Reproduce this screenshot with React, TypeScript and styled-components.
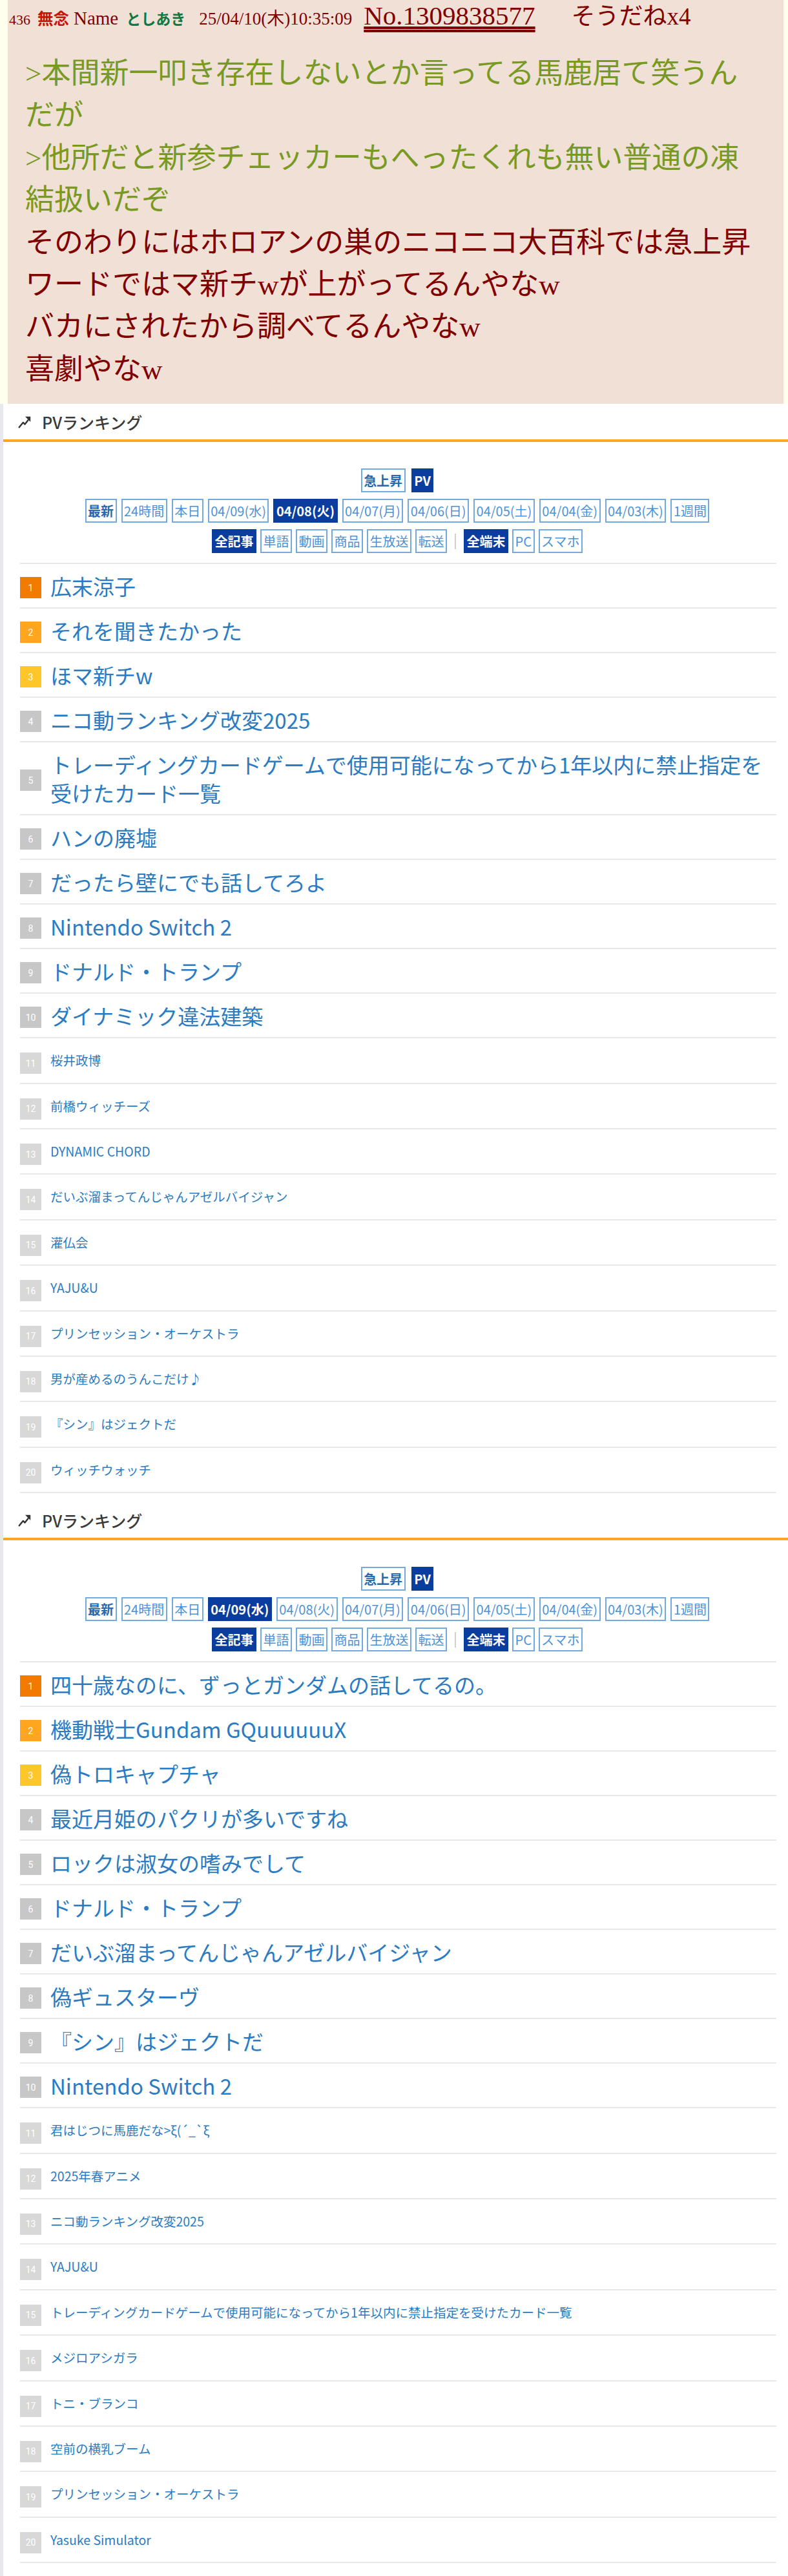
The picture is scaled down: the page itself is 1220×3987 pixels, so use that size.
import React from 'react';
import styled, { createGlobalStyle } from 'styled-components';

const GlobalStyle = createGlobalStyle`
  html, body {
    margin: 0;
    padding: 0;
    background: #fff;
  }
  body {
    font-family: "Noto Sans CJK JP", "Noto Sans", sans-serif;
  }
`;

const postLines: { text: string; quote?: boolean }[] = [
  { text: '>本間新一叩き存在しないとか言ってる馬鹿居て笑うんだが', quote: true },
  { text: '>他所だと新参チェッカーもへったくれも無い普通の凍結扱いだぞ', quote: true },
  { text: 'そのわりにはホロアンの巣のニコニコ大百科では急上昇ワードではマ新チwが上がってるんやなw' },
  { text: 'バカにされたから調べてるんやなw' },
  { text: '喜劇やなw' },
];

const dates = ['04/09(水)', '04/08(火)', '04/07(月)', '04/06(日)', '04/05(土)', '04/04(金)', '04/03(木)'];

const rankingA = [
  '広末涼子',
  'それを聞きたかった',
  'ほマ新チw',
  'ニコ動ランキング改変2025',
  'トレーディングカードゲームで使用可能になってから1年以内に禁止指定を受けたカード一覧',
  'ハンの廃墟',
  'だったら壁にでも話してろよ',
  'Nintendo Switch 2',
  'ドナルド・トランプ',
  'ダイナミック違法建築',
  '桜井政博',
  '前橋ウィッチーズ',
  'DYNAMIC CHORD',
  'だいぶ溜まってんじゃんアゼルバイジャン',
  '灌仏会',
  'YAJU&U',
  'プリンセッション・オーケストラ',
  '男が産めるのうんこだけ♪',
  '『シン』はジェクトだ',
  'ウィッチウォッチ',
];

const rankingB = [
  '四十歳なのに、ずっとガンダムの話してるの。',
  '機動戦士Gundam GQuuuuuuX',
  '偽トロキャプチャ',
  '最近月姫のパクリが多いですね',
  'ロックは淑女の嗜みでして',
  'ドナルド・トランプ',
  'だいぶ溜まってんじゃんアゼルバイジャン',
  '偽ギュスターヴ',
  '『シン』はジェクトだ',
  'Nintendo Switch 2',
  '君はじつに馬鹿だな>ξ(´_`ξ',
  '2025年春アニメ',
  'ニコ動ランキング改変2025',
  'YAJU&U',
  'トレーディングカードゲームで使用可能になってから1年以内に禁止指定を受けたカード一覧',
  'メジロアシガラ',
  'トニ・ブランコ',
  '空前の横乳ブーム',
  'プリンセッション・オーケストラ',
  'Yasuke Simulator',
];

const badgeColor = (rank: number) => {
  if (rank === 1) return '#f27a00';
  if (rank === 2) return '#ffa61e';
  if (rank === 3) return '#ffc62a';
  if (rank <= 10) return '#c7c7c7';
  return '#d8d8d8';
};

const TrendIcon = () => (
  <svg width="22" height="22" viewBox="0 0 24 24">
    <path
      d="M3 21 L9.5 13 L12.5 16 L18 9"
      stroke="#333"
      strokeWidth="2.6"
      fill="none"
      strokeLinecap="round"
      strokeLinejoin="round"
    />
    <path d="M13 3 H22 V12 Z" fill="#333" />
  </svg>
);

function RankingSection({ activeDate, items }: { activeDate: string; items: string[] }) {
  return (
    <Section>
      <SectionHead>
        <TrendIcon />
        <span>PVランキング</span>
      </SectionHead>
      <Tabs>
        <TabRow $gap={9}>
          <Tab $strong>急上昇</Tab>
          <Tab $active>PV</Tab>
        </TabRow>
        <TabRow $gap={7}>
          <Tab $strong>最新</Tab>
          <Tab>24時間</Tab>
          <Tab>本日</Tab>
          {dates.map((d) => (
            <Tab key={d} $active={d === activeDate}>
              {d}
            </Tab>
          ))}
          <Tab>1週間</Tab>
        </TabRow>
        <TabRow $gap={6}>
          <Tab $active>全記事</Tab>
          <Tab>単語</Tab>
          <Tab>動画</Tab>
          <Tab>商品</Tab>
          <Tab>生放送</Tab>
          <Tab>転送</Tab>
          <TabDivider />
          <Tab $active>全端末</Tab>
          <Tab>PC</Tab>
          <Tab>スマホ</Tab>
        </TabRow>
      </Tabs>
      <RankList>
        {items.map((title, i) => {
          const rank = i + 1;
          const small = rank > 10;
          return (
            <RankRow key={rank} $small={small}>
              <Badge $color={badgeColor(rank)} $small={small}>
                {rank}
              </Badge>
              <RankLink href="#" $small={small}>
                {title}
              </RankLink>
            </RankRow>
          );
        })}
      </RankList>
    </Section>
  );
}

const App = () => {
  return (
    <Page>
      <GlobalStyle />
      <PostArea>
        <Post>
          <PostHead>
            <ResNum>436</ResNum>
            <Subject>無念</Subject>
            <NameLabel>Name</NameLabel>
            <Poster>としあき</Poster>
            <PostDate>25/04/10(木)10:35:09</PostDate>
            <PostNo href="#">No.1309838577</PostNo>
            <Sodane>そうだねx4</Sodane>
          </PostHead>
          <PostBody>
            {postLines.map((l, i) => (
              <Line key={i} $quote={l.quote}>
                {l.text}
              </Line>
            ))}
          </PostBody>
        </Post>
      </PostArea>
      <Rankings>
        <RankingSection activeDate="04/08(火)" items={rankingA} />
        <RankingSection activeDate="04/09(水)" items={rankingB} />
      </Rankings>
    </Page>
  );
};

export default App;

const Page = styled.div`
  width: 1220px;
  min-height: 3987px;
  background: #fff;
`;

const PostArea = styled.div`
  background: #ffffee;
  padding: 0 7px 0 12px;
`;

const Post = styled.div`
  background: #f0e0d6;
  padding: 0 36px 20px 0;
  font-family: "Liberation Serif", "Noto Sans CJK JP", serif;
  color: #800000;
`;

const PostHead = styled.div`
  display: flex;
  align-items: baseline;
  box-sizing: border-box;
  height: 46px;
  padding: 4px 0 0 2px;
  line-height: 1;
  white-space: nowrap;
`;

const ResNum = styled.span`
  font-size: 22px;
`;

const Subject = styled.span`
  margin-left: 11px;
  font-family: "Noto Sans CJK JP", sans-serif;
  font-weight: 700;
  font-size: 24.5px;
  color: #cc1105;
`;

const NameLabel = styled.span`
  margin-left: 7px;
  font-size: 29px;
`;

const Poster = styled.span`
  margin-left: 12px;
  font-family: "Noto Sans CJK JP", sans-serif;
  font-weight: 700;
  font-size: 23px;
  color: #117743;
`;

const PostDate = styled.span`
  margin-left: 21px;
  font-size: 27px;
`;

const PostNo = styled.a`
  margin-left: 18px;
  font-size: 41px;
  color: #800000;
  text-decoration: underline double;
  text-underline-offset: 3px;
`;

const Sodane = styled.span`
  margin-left: 56px;
  font-size: 37px;
`;

const PostBody = styled.div`
  margin: 36px 0 0 27px;
  font-size: 45px;
  line-height: 65.4px;
`;

const Line = styled.div<{ $quote?: boolean }>`
  color: ${(p) => (p.$quote ? '#789922' : '#800000')};
`;

const Rankings = styled.div`
  border-left: 5px solid #e7e8ec;
  background: #fff;
  padding-bottom: 33px;
`;

const Section = styled.section`
  & + & {
    margin-top: 14px;
  }
`;

const SectionHead = styled.h2`
  margin: 0;
  box-sizing: border-box;
  height: 59px;
  display: flex;
  align-items: center;
  gap: 16px;
  padding-left: 22px;
  border-bottom: 4px solid #ffa620;
  font-family: "Noto Sans CJK JP", sans-serif;
  font-weight: 500;
  font-size: 25px;
  color: #3a3a3a;
`;

const Tabs = styled.div`
  display: flex;
  flex-direction: column;
  gap: 10px;
  padding: 41px 0 0 5px;
`;

const TabRow = styled.div<{ $gap: number }>`
  display: flex;
  justify-content: center;
  align-items: center;
  gap: ${(p) => p.$gap}px;
`;

const Tab = styled.span<{ $active?: boolean; $strong?: boolean }>`
  box-sizing: border-box;
  height: 37px;
  padding: 0 2.5px;
  border: 2px solid ${(p) => (p.$active ? '#0b3d9f' : '#71a9e0')};
  background: ${(p) => (p.$active ? '#0b3d9f' : '#fff')};
  color: ${(p) => (p.$active ? '#fff' : p.$strong ? '#2a68b2' : '#4d92d6')};
  font-weight: ${(p) => (p.$active || p.$strong ? 700 : 400)};
  font-size: 20px;
  line-height: 33px;
  white-space: nowrap;
`;

const TabDivider = styled.span`
  width: 2px;
  height: 24px;
  margin: 0 6px;
  background: #cfcfcf;
`;

const RankList = styled.ol`
  list-style: none;
  margin: 15px 18px 0 26px;
  padding: 0;
  border-top: 2px solid #e8e8e8;
`;

const RankRow = styled.li<{ $small?: boolean }>`
  display: flex;
  align-items: center;
  padding: 12px 0 ${(p) => (p.$small ? 12.4 : 11)}px;
  border-bottom: 2px solid #e8e8e8;
`;

const Badge = styled.span<{ $color: string; $small?: boolean }>`
  flex: none;
  width: 33px;
  height: 33px;
  margin-top: ${(p) => (p.$small ? 9 : 5)}px;
  display: flex;
  align-items: center;
  justify-content: center;
  background: ${(p) => p.$color};
  color: #fff;
  font-family: Roboto, "Liberation Sans", sans-serif;
  font-size: 14px;
`;

const RankLink = styled.a<{ $small?: boolean }>`
  flex: 1;
  min-width: 0;
  margin-left: 14px;
  font-size: ${(p) => (p.$small ? 19.5 : 33)}px;
  line-height: 44px;
  color: #2b7bc3;
  text-decoration: none;
`;
